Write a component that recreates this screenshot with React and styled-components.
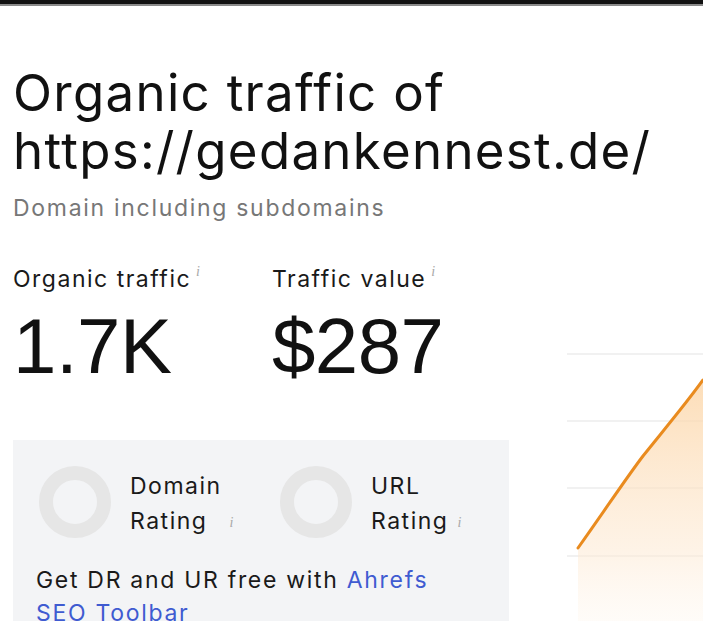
import React from 'react';
import styled, { createGlobalStyle } from 'styled-components';

const GlobalStyle = createGlobalStyle`
  html, body {
    margin: 0;
    padding: 0;
    background: #ffffff;
    overflow: hidden;
  }
  body {
    font-family: Inter, 'Liberation Sans', sans-serif;
    color: #111111;
  }
`;

const TopBar = styled.div`
  height: 4px;
  background: #111111;
  border-bottom: 2px solid #8a8a8a;
`;

const Page = styled.div`
  padding-left: 13px;
  height: 615px;
  overflow: hidden;
`;

const Header = styled.header`
  padding-top: 58px;
`;

const Title = styled.h1`
  margin: 0;
  font-size: 51px;
  font-weight: 400;
  line-height: 58px;
  letter-spacing: 1.3px;
  white-space: nowrap;
`;

const Subtitle = styled.p`
  margin: 14px 0 0;
  font-size: 23px;
  line-height: 28px;
  letter-spacing: 1.7px;
  color: #777777;
`;

const Body = styled.div`
  display: flex;
  justify-content: space-between;
`;

const Left = styled.div`
  width: 496px;
`;

const Metrics = styled.div`
  display: flex;
  gap: 72px;
  margin-top: 43px;
`;

const Metric = styled.div`
  display: flex;
  flex-direction: column;
`;

const Label = styled.div`
  font-size: 23px;
  line-height: 28px;
  letter-spacing: 1.5px;
  color: #1a1a1a;
  display: flex;
  align-items: flex-start;
`;

const Info = styled.span`
  font-family: 'Liberation Serif', serif;
  font-style: italic;
  font-size: 14px;
  color: #a8a8a8;
  margin-left: ${(p) => p.$gap || 5}px;
  line-height: 14px;
  letter-spacing: 0;
  vertical-align: ${(p) => (p.$inline ? 'middle' : 'top')};
`;

const Value = styled.div`
  font-family: 'Liberation Sans', Arial, sans-serif;
  font-size: 78px;
  line-height: 90px;
  letter-spacing: -0.5px;
  margin-top: 8px;
`;

const RatingBox = styled.div`
  margin-top: 49px;
  background: #f3f4f6;
  padding: 24px 20px 0 23px;
  height: 200px;
`;

const RatingRow = styled.div`
  display: grid;
  grid-template-columns: 244px 1fr;
`;

const Rating = styled.div`
  display: flex;
  align-items: center;
  gap: 19px;
`;

const Donut = styled.div`
  width: 72px;
  height: 72px;
  margin-left: ${(p) => p.$offset || 0}px;
  box-sizing: border-box;
  border-radius: 50%;
  border: 14px solid #e6e6e6;
  flex: none;
`;

const RatingLabel = styled.div`
  font-size: 23px;
  line-height: 35px;
  letter-spacing: 1.5px;
  color: #1a1a1a;
  padding-top: 5px;
`;

const Promo = styled.p`
  margin: 25px 0 0;
  max-width: 400px;
  font-size: 23px;
  line-height: 33px;
  letter-spacing: 1.7px;
  color: #1a1a1a;
  a {
    color: #3f5bd1;
    text-decoration: none;
  }
`;

const Chart = styled.div`
  width: 136px;
  margin-top: 131px;
  flex: none;
`;

function MetricBlock({ label, value }) {
  return (
    <Metric>
      <Label>
        {label}
        <Info>i</Info>
      </Label>
      <Value>{value}</Value>
    </Metric>
  );
}

function TrafficChart() {
  const line = 'M11 195 C 38 157, 60 124, 76 103 C 96 78, 118 52, 136 27';
  return (
    <svg width="136" height="270" viewBox="0 0 136 270">
      <defs>
        <linearGradient id="fill" x1="0" y1="0" x2="0" y2="1">
          <stop offset="0" stopColor="#fcd5a6" stopOpacity="0.8" />
          <stop offset="0.7" stopColor="#fde9d2" stopOpacity="0.55" />
          <stop offset="1" stopColor="#fef5ea" stopOpacity="0.3" />
        </linearGradient>
      </defs>
      {[1, 68, 135, 203].map((y) => (
        <line key={y} x1="0" x2="136" y1={y} y2={y} stroke="#ececec" strokeWidth="1.5" />
      ))}
      <path d={`${line} L136 270 L11 270 Z`} fill="url(#fill)" />
      <path d={line} fill="none" stroke="#e98b1f" strokeWidth="3" strokeLinecap="round" />
    </svg>
  );
}

export default function App() {
  return (
    <>
      <GlobalStyle />
      <TopBar />
      <Page>
        <Header>
          <Title>
            Organic traffic of
            <br />
            https://gedankennest.de/
          </Title>
          <Subtitle>Domain including subdomains</Subtitle>
        </Header>
        <Body>
          <Left>
            <Metrics>
              <MetricBlock label="Organic traffic" value="1.7K" />
              <MetricBlock label="Traffic value" value="$287" />
            </Metrics>
            <RatingBox>
              <RatingRow>
                <Rating>
                  <Donut $offset={3} />
                  <RatingLabel>
                    Domain
                    <br />
                    Rating <Info $gap={14} $inline>i</Info>
                  </RatingLabel>
                </Rating>
                <Rating>
                  <Donut />
                  <RatingLabel>
                    URL
                    <br />
                    Rating<Info $gap={9} $inline>i</Info>
                  </RatingLabel>
                </Rating>
              </RatingRow>
              <Promo>
                Get DR and UR free with <a href="#">Ahrefs SEO Toolbar</a>
              </Promo>
            </RatingBox>
          </Left>
          <Chart>
            <TrafficChart />
          </Chart>
        </Body>
      </Page>
    </>
  );
}
